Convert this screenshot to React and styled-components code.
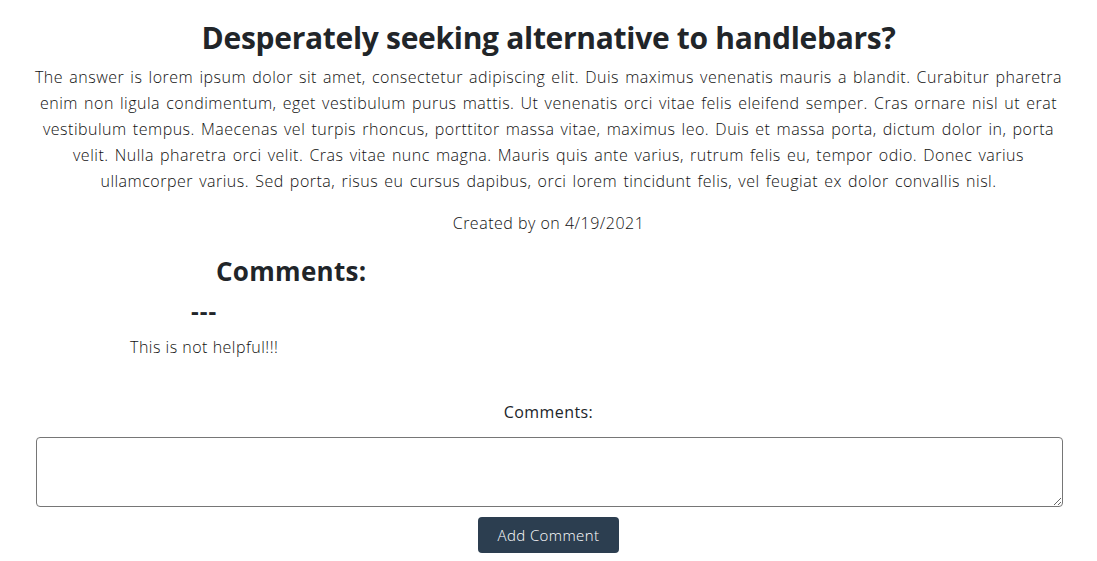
import React from 'react';
import styled, { createGlobalStyle } from 'styled-components';

const GlobalStyle = createGlobalStyle`
  body {
    margin: 0;
    background: #fff;
    color: #212529;
    font-family: 'Open Sans', 'Noto Sans', sans-serif;
    font-weight: 300;
  }
`;

const Page = styled.main`
  width: 1029px;
  margin: 0 auto;
  padding-top: 18px;
  text-align: center;
`;

const Title = styled.h1`
  margin: 0 0 6px;
  font-size: 30px;
  font-weight: 700;
  line-height: 40px;
  letter-spacing: -0.3px;
`;

const Body = styled.p`
  margin: 0 0 16px;
  font-size: 16px;
  line-height: 26px;
  letter-spacing: 0.5px;
  word-spacing: 1.5px;
  color: #111;
`;

const Meta = styled.p`
  margin: 0;
  font-size: 16px;
  line-height: 26px;
  letter-spacing: 0.5px;
  color: #111;
`;

const CommentGrid = styled.section`
  display: grid;
  grid-template-columns: 1fr 1fr;
  margin-top: 18px;
`;

const CommentCol = styled.div`
  display: flex;
  flex-direction: column;
  align-items: center;
`;

const CommentHead = styled.h2`
  margin: 0;
  font-size: 26px;
  font-weight: 700;
  line-height: 34px;
  letter-spacing: 0.3px;
`;

const CommentList = styled.ul`
  list-style: none;
  margin: 8px 0 0 96px;
  padding: 0;
  width: fit-content;
  align-self: flex-start;
`;

const CommentItem = styled.li`
  text-align: center;
`;

const Author = styled.h3`
  margin: 0;
  font-size: 24px;
  font-weight: 700;
  line-height: 30px;
  letter-spacing: 1px;
`;

const CommentText = styled.p`
  margin: 9px 0 0;
  font-size: 16px;
  line-height: 24px;
  letter-spacing: 0.5px;
  color: #111;
`;

const Form = styled.form`
  margin-top: 41px;
  display: flex;
  flex-direction: column;
  align-items: center;
`;

const Label = styled.label`
  font-size: 16px;
  font-weight: 400;
  line-height: 24px;
  margin-bottom: 13px;
  letter-spacing: 0.4px;
`;

const TextArea = styled.textarea`
  box-sizing: border-box;
  width: 1027px;
  height: 70px;
  margin-left: 2px;
  border: 1px solid #767676;
  border-radius: 4px;
  font: inherit;
`;

const Button = styled.button`
  margin-top: 10px;
  height: 36px;
  padding: 0 20px;
  border: none;
  border-radius: 4px;
  background: #2c3e50;
  color: #fff;
  font-family: inherit;
  font-weight: 300;
  font-size: 15px;
  letter-spacing: 0.4px;
`;

const comments = [{ author: '---', text: 'This is not helpful!!!' }];

export default function App() {
  return (
    <>
      <GlobalStyle />
      <Page>
        <Title>Desperately seeking alternative to handlebars?</Title>
        <Body>
          The answer is lorem ipsum dolor sit amet, consectetur adipiscing elit. Duis maximus venenatis mauris a blandit. Curabitur pharetra enim non ligula condimentum, eget vestibulum purus mattis. Ut venenatis orci vitae felis eleifend semper. Cras ornare nisl ut erat vestibulum tempus. Maecenas vel turpis rhoncus, porttitor massa vitae, maximus leo. Duis et massa porta, dictum dolor in, porta velit. Nulla pharetra orci velit. Cras vitae nunc magna. Mauris quis ante varius, rutrum felis eu, tempor odio. Donec varius ullamcorper varius. Sed porta, risus eu cursus dapibus, orci lorem tincidunt felis, vel feugiat ex dolor convallis nisl.
        </Body>
        <Meta>Created by on 4/19/2021</Meta>
        <CommentGrid>
          <CommentCol>
            <CommentHead>Comments:</CommentHead>
            <CommentList>
              {comments.map((c, i) => (
                <CommentItem key={i}>
                  <Author>{c.author}</Author>
                  <CommentText>{c.text}</CommentText>
                </CommentItem>
              ))}
            </CommentList>
          </CommentCol>
        </CommentGrid>
        <Form onSubmit={(e) => e.preventDefault()}>
          <Label htmlFor="comment">Comments:</Label>
          <TextArea id="comment" />
          <Button type="submit">Add Comment</Button>
        </Form>
      </Page>
    </>
  );
}
